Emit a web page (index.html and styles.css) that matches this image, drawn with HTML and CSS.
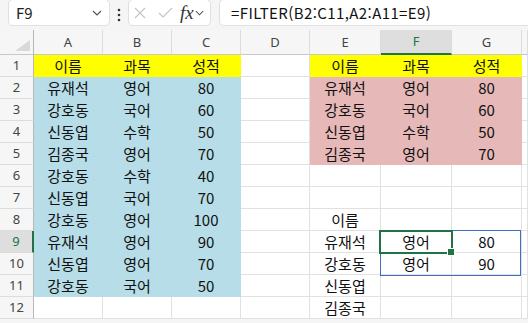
FILE: index.html
```html
<!DOCTYPE html>
<html lang="ko">
<head>
    <meta charset="UTF-8">
    <title>FILTER</title>
    <link rel="stylesheet" href="styles.css">
</head>
<body>
    <div class="toolbar">
        <div class="namebox">
            <span>F9</span>
            <svg class="chev" width="10" height="6" viewBox="0 0 10 6"><polyline points="1,1 5,5 9,1"/></svg>
        </div>
        <svg class="dots" width="4" height="14" viewBox="0 0 4 14"><circle cx="2" cy="2" r="1.3"/><circle cx="2" cy="7" r="1.3"/><circle cx="2" cy="12" r="1.3"/></svg>
        <div class="fxbox">
            <svg class="icon-x" width="12" height="12" viewBox="0 0 12 12"><line x1="1" y1="1" x2="11" y2="11"/><line x1="11" y1="1" x2="1" y2="11"/></svg>
            <svg class="icon-ok" width="15" height="11" viewBox="0 0 15 11"><polyline points="1,6 5,10 14,1"/></svg>
            <span class="fx">fx</span>
            <svg class="chev" width="9" height="6" viewBox="0 0 10 6"><polyline points="1,1 5,5 9,1"/></svg>
        </div>
        <div class="formula">=FILTER(B2:C11,A2:A11=E9)</div>
    </div>

    <div class="sheet" id="sheet">
        <div class="sel"><span class="handle"></span></div>
        <div class="spill"></div>
    </div>

    <script>
        const cols = ["A", "B", "C", "D", "E", "F", "G", ""];
        const data = [
            ["이름", "과목", "성적", "", "이름", "과목", "성적"],
            ["유재석", "영어", "80", "", "유재석", "영어", "80"],
            ["강호동", "국어", "60", "", "강호동", "국어", "60"],
            ["신동엽", "수학", "50", "", "신동엽", "수학", "50"],
            ["김종국", "영어", "70", "", "김종국", "영어", "70"],
            ["강호동", "수학", "40", "", "", "", ""],
            ["신동엽", "국어", "70", "", "", "", ""],
            ["강호동", "영어", "100", "", "이름", "", ""],
            ["유재석", "영어", "90", "", "유재석", "영어", "80"],
            ["신동엽", "영어", "70", "", "강호동", "영어", "90"],
            ["강호동", "국어", "50", "", "신동엽", "", ""],
            ["", "", "", "", "김종국", "", ""]
        ];

        function fillOf(r, c) {
            if (r === 0 && c !== 3 && c < 7) return "yellow";
            if (c < 3 && r <= 10) return "blue";
            if (c >= 4 && c < 7 && r <= 4) return "pink";
            return "";
        }

        const sheet = document.getElementById("sheet");
        let html = '<div class="corner"></div>';
        cols.forEach((c, i) => {
            html += `<div class="colhead${i === 5 ? " active" : ""}">${c}</div>`;
        });
        data.forEach((row, r) => {
            html += `<div class="rowhead${r === 8 ? " active" : ""}">${r + 1}</div>`;
            for (let c = 0; c < 8; c++) {
                const fill = fillOf(r, c);
                html += `<div class="cell ${fill}">${row[c] || ""}</div>`;
            }
        });
        sheet.insertAdjacentHTML("beforeend", html);
    </script>
</body>
</html>
```

FILE: styles.css
```css
body {
    margin: 0;
    background: #f5f5f5;
    font-family: "Noto Sans CJK KR", "Noto Sans", sans-serif;
    overflow: hidden;
}
.toolbar {
    height: 30px;
    display: flex;
    align-items: flex-start;
    padding-left: 8px;
}
.namebox, .fxbox, .formula {
    height: 27px;
    margin-top: -1px;
    box-sizing: border-box;
    background: #fff;
    border: 1px solid #e0e0e0;
    border-radius: 5px;
    display: flex;
    align-items: center;
}
.namebox {
    width: 102px;
    padding: 0 7px 0 7px;
    justify-content: space-between;
    font-size: 15px;
    color: #222;
}
.chev polyline {
    fill: none;
    stroke: #555;
    stroke-width: 1.2;
}
.dots {
    margin: 8px 7px 0 7px;
    fill: #333;
}
.fxbox {
    width: 83px;
    padding: 0 4px 0 5px;
    gap: 0;
}
.icon-x line, .icon-ok polyline {
    fill: none;
    stroke: #c4c4c4;
    stroke-width: 1.1;
}
.icon-x { margin-right: 12px; }
.icon-ok { margin-right: 7px; }
.fx {
    font-family: "Liberation Serif", serif;
    font-style: italic;
    font-size: 19px;
    color: #333;
    margin-right: 1px;
    line-height: 1;
}
.formula {
    margin-left: 8px;
    flex: 1;
    border-right: none;
    border-radius: 5px 0 0 5px;
    padding-left: 11px;
    font-size: 15px;
    letter-spacing: 0.4px;
    color: #111;
}
.sheet {
    position: relative;
    display: grid;
    grid-template-columns: 34px 69px 69px 69px 69px 71px 71px 70px 1fr;
    grid-template-rows: 25px repeat(12, 22px);
    background: #fff;
}
.corner, .colhead, .rowhead, .cell {
    box-sizing: border-box;
    border-right: 1px solid #e1e1e1;
    border-bottom: 1px solid #e1e1e1;
}
.corner {
    background: #f6f6f6;
    border-right-color: #b8b8b8;
    border-bottom-color: #c8c8c8;
    position: relative;
}
.corner::after {
    content: "";
    position: absolute;
    right: 3px;
    bottom: 3px;
    width: 15px;
    height: 11px;
    background: #d9d9d9;
    clip-path: polygon(100% 0, 100% 100%, 0 100%);
}
.colhead {
    background: #f6f6f6;
    border-bottom-color: #c8c8c8;
    border-right-color: #dcdcdc;
    font-family: "Noto Sans", sans-serif;
    font-size: 13px;
    color: #444;
    text-align: center;
    line-height: 24px;
}
.colhead.active {
    background: #dedede;
    color: #217346;
    border-bottom: 2px solid #217346;
    line-height: 23px;
}
.rowhead {
    background: #f6f6f6;
    border-right-color: #b8b8b8;
    border-bottom-color: #dcdcdc;
    font-family: "Noto Sans", sans-serif;
    font-size: 13px;
    color: #444;
    text-align: center;
    line-height: 21px;
}
.rowhead.active {
    background: #dedede;
    color: #217346;
    border-right: 2px solid #217346;
}
.cell {
    font-size: 15px;
    color: #111;
    text-align: center;
    line-height: 21px;
    white-space: nowrap;
}
.cell.yellow { background: #ffff00; border-color: #ffff00; }
.cell.blue { background: #b7dde8; border-color: #b7dde8; }
.cell.pink { background: #e6b8b7; border-color: #e6b8b7; }
.sel {
    position: absolute;
    left: 379px;
    top: 200px;
    width: 74px;
    height: 24px;
    box-sizing: border-box;
    border: 2px solid #217346;
    z-index: 2;
}
.handle {
    position: absolute;
    right: -4px;
    bottom: -4px;
    width: 6px;
    height: 6px;
    background: #217346;
    border: 1px solid #fff;
}
.spill {
    position: absolute;
    left: 380px;
    top: 200px;
    width: 141px;
    height: 46px;
    box-sizing: border-box;
    border: 1px solid #3b6fc6;
    z-index: 1;
}
```
